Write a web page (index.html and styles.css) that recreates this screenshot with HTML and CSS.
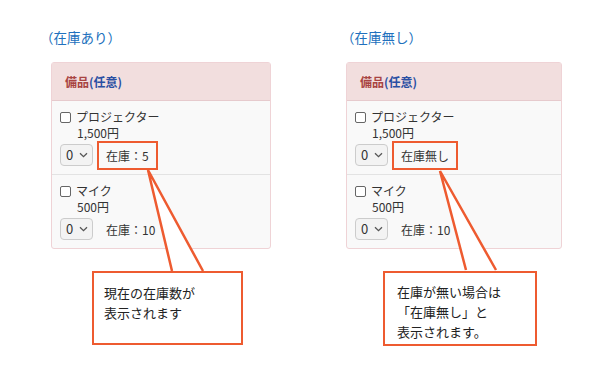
FILE: index.html
```html
<!DOCTYPE html>
<html lang="ja">
<head>
    <meta charset="UTF-8">
    <meta name="viewport" content="width=device-width, initial-scale=1.0">
    <title>在庫表示</title>
    <link rel="stylesheet" href="styles.css">
</head>
<body>
    <div class="page">
        <!-- 在庫あり -->
        <section class="panel panel-left">
            <h2 class="caption">（在庫あり）</h2>
            <div class="card">
                <div class="card-head"><span class="head-red">備品</span><span class="head-blue">(任意)</span></div>
                <div class="item">
                    <div class="item-name"><span class="check"></span>プロジェクター</div>
                    <div class="item-price">1,500円</div>
                    <div class="item-ctrl">
                        <span class="qty">0<svg width="9" height="6" viewBox="0 0 9 6"><path d="M1 1.2 4.5 4.6 8 1.2" fill="none" stroke="#555" stroke-width="1.3"/></svg></span>
                        <span class="stock marked">在庫：5</span>
                    </div>
                </div>
                <div class="item">
                    <div class="item-name"><span class="check"></span>マイク</div>
                    <div class="item-price">500円</div>
                    <div class="item-ctrl">
                        <span class="qty">0<svg width="9" height="6" viewBox="0 0 9 6"><path d="M1 1.2 4.5 4.6 8 1.2" fill="none" stroke="#555" stroke-width="1.3"/></svg></span>
                        <span class="stock">在庫：10</span>
                    </div>
                </div>
            </div>
            <div class="note">現在の在庫数が<br>表示されます</div>
        </section>

        <!-- 在庫無し -->
        <section class="panel panel-right">
            <h2 class="caption">（在庫無し）</h2>
            <div class="card">
                <div class="card-head"><span class="head-red">備品</span><span class="head-blue">(任意)</span></div>
                <div class="item">
                    <div class="item-name"><span class="check"></span>プロジェクター</div>
                    <div class="item-price">1,500円</div>
                    <div class="item-ctrl">
                        <span class="qty">0<svg width="9" height="6" viewBox="0 0 9 6"><path d="M1 1.2 4.5 4.6 8 1.2" fill="none" stroke="#555" stroke-width="1.3"/></svg></span>
                        <span class="stock marked">在庫無し</span>
                    </div>
                </div>
                <div class="item">
                    <div class="item-name"><span class="check"></span>マイク</div>
                    <div class="item-price">500円</div>
                    <div class="item-ctrl">
                        <span class="qty">0<svg width="9" height="6" viewBox="0 0 9 6"><path d="M1 1.2 4.5 4.6 8 1.2" fill="none" stroke="#555" stroke-width="1.3"/></svg></span>
                        <span class="stock">在庫：10</span>
                    </div>
                </div>
            </div>
            <div class="note">在庫が無い場合は<br>「在庫無し」と<br>表示されます。</div>
        </section>

        <!-- 吹き出しのしっぽ -->
        <svg class="tails" width="597" height="371" viewBox="0 0 597 371">
            <polyline points="172,271 148,170 203,271" fill="#fff" stroke="#ee5b30" stroke-width="2.5" stroke-linejoin="miter"/>
            <polyline points="466,270 440,171 496,270" fill="#fff" stroke="#ee5b30" stroke-width="2.5" stroke-linejoin="miter"/>
        </svg>
    </div>
</body>
</html>
```

FILE: styles.css
```css
/* 全体 */
body {
    margin: 0;
    background: #fff;
    font-family: "Noto Sans CJK JP", "Noto Sans", sans-serif;
    color: #333;
}

.page {
    position: relative;
    display: flex;
    width: 597px;
    height: 371px;
    box-sizing: border-box;
    padding-top: 28px;
}

/* パネル */
.panel {
    display: flex;
    flex-direction: column;
}

.panel-left {
    margin-left: 45px;
    width: 301px;
}

.caption {
    margin: 0 0 0 -5px;
    font-size: 13.5px;
    line-height: 18px;
    font-weight: normal;
    color: #2170bd;
}

/* カード */
.card {
    margin-top: 16px;
    width: 220px;
    box-sizing: border-box;
    border: 1px solid #efd3d6;
    border-radius: 3px;
    background: #f9f9f9;
    font-size: 12px;
}

.panel-left .card {
    margin-left: 6px;
}

.panel-right .card {
    width: 216px;
}

.card-head {
    height: 37px;
    display: flex;
    align-items: center;
    padding-left: 13px;
    background: #f2dede;
    border-bottom: 1px solid #e6cacd;
    font-weight: bold;
    font-size: 12px;
}

.head-red {
    color: #a94442;
}

.head-blue {
    color: #2a4fa3;
}

.item {
    padding: 8px 0 8px 8px;
    line-height: 16px;
}

.item + .item {
    border-top: 1px solid #e3e3e3;
}

.item-name {
    display: flex;
    align-items: center;
}

.check {
    width: 9px;
    height: 9px;
    border: 1.5px solid #666;
    border-radius: 2px;
    background: #fff;
    margin-right: 5px;
}

.item-price {
    padding-left: 17px;
}

.item-ctrl {
    display: flex;
    align-items: center;
    margin-top: 3px;
    height: 22px;
}

.qty {
    display: flex;
    align-items: center;
    gap: 6px;
    width: 33px;
    height: 22px;
    box-sizing: border-box;
    padding-left: 5px;
    border: 1px solid #ccc;
    border-radius: 4px;
    background: #f3f3f3;
    font-size: 13px;
}

.stock {
    margin-left: 4px;
    padding: 5px 7px 4px;
    border: 2px solid transparent;
    line-height: 16px;
}

.stock.marked {
    border-color: #ee5b30;
}

/* 吹き出し */
.note {
    margin-top: 22px;
    box-sizing: border-box;
    border: 2px solid #ee5b30;
    background: #fff;
    font-size: 13px;
    line-height: 20px;
    color: #222;
}

.panel-left .note {
    margin-left: 47px;
    width: 151px;
    height: 74px;
    padding: 10px 0 0 10px;
}

.panel-right .note {
    margin-left: 37px;
    width: 154px;
    height: 75px;
    padding: 9px 0 0 12px;
}

.tails {
    position: absolute;
    left: 0;
    top: 0;
    pointer-events: none;
}
```
